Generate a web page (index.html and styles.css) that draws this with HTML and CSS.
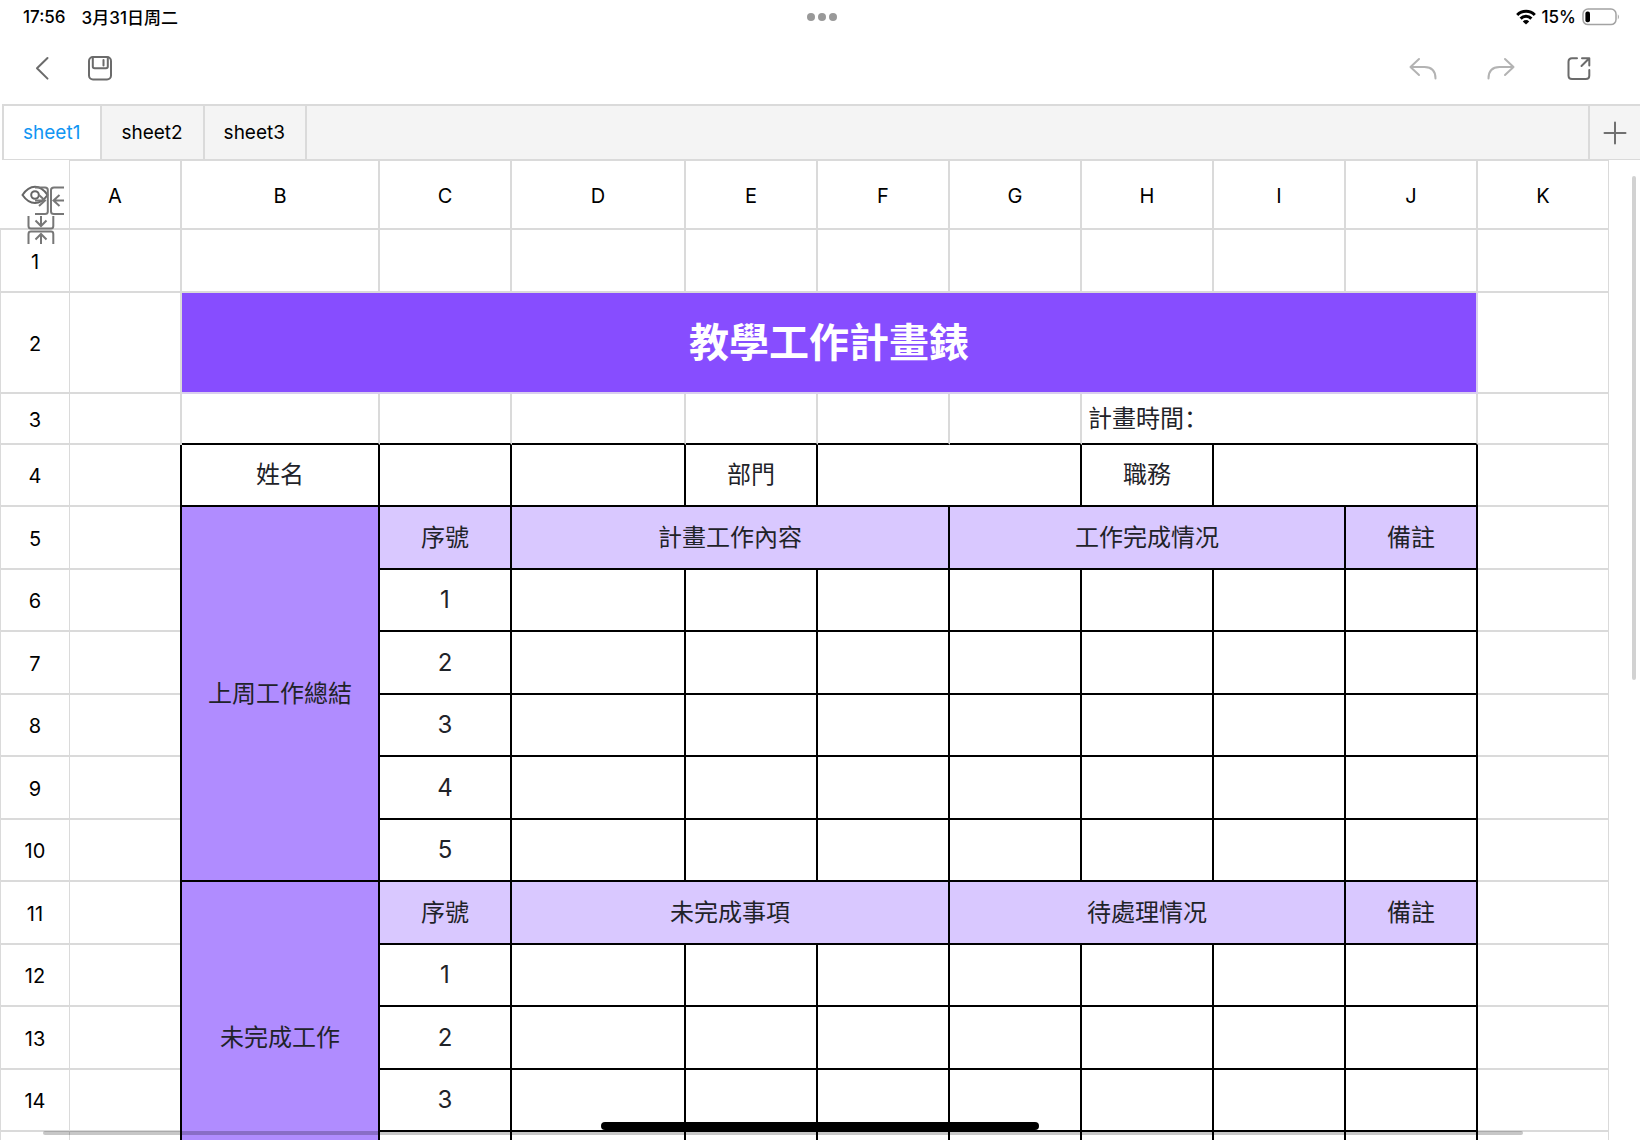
FILE: index.html
```html
<!DOCTYPE html>
<html lang="zh-CN">
<head>
    <meta charset="UTF-8">
    <meta name="viewport" content="width=device-width, initial-scale=1.0">
    <title>教學工作計畫錶</title>
    <link rel="stylesheet" href="styles.css">
</head>
<body>
    <div class="statusbar">
      <div class="status-left">
        <span>17:56</span>
        <span>3月31日周二</span>
      </div>
      <div class="dots"><i></i><i></i><i></i></div>
      <div class="status-right">
        <svg width="20" height="16" viewBox="0 0 20 16" fill="none" stroke="#000" stroke-width="3">
          <path d="M1.2 6 a12.4 12.4 0 0 1 17.6 0"/>
          <path d="M4.6 9.6 a7.6 7.6 0 0 1 10.8 0"/>
          <path d="M10 15.6 L6.8 12.4 a4.6 4.6 0 0 1 6.4 0 Z" fill="#000" stroke="none"/>
        </svg>
        <span>15%</span>
        <svg class="battery" width="38" height="18" viewBox="0 0 38 18">
          <rect x="1" y="1" width="33" height="15.6" rx="5" fill="none" stroke="#a3a3a3" stroke-width="1.5"/>
          <rect x="3.4" y="3.4" width="4.6" height="10.8" rx="2" fill="#000"/>
          <path d="M35.8 6.2 q2.2 2.6 0 5.2 z" fill="#a3a3a3"/>
        </svg>
      </div>
    </div>

    <div class="toolbar">
      <button class="tool" aria-label="Back">
        <svg width="28" height="28" viewBox="0 0 28 28"><path d="M19.5 4 L9 14.3 L19.5 24.6"/></svg>
      </button>
      <button class="tool" aria-label="Save">
        <svg width="28" height="28" viewBox="0 0 28 28"><rect x="3" y="3" width="22" height="22.5" rx="4"/><path d="M6.8 3.5 V12.5 Q6.8 14.3 8.6 14.3 H20 Q21.8 14.3 21.8 12.5 V3.5 M17.5 6 V11.5"/></svg>
      </button>
      <span class="spacer"></span>
      <button class="tool wide dim" aria-label="Undo">
        <svg width="28" height="28" viewBox="0 0 28 28"><path d="M10 5 L1.5 13 L10 21 M1.5 13 H15.5 Q26.5 13 26.5 24.5"/></svg>
      </button>
      <button class="tool wide dim" aria-label="Redo">
        <svg width="28" height="28" viewBox="0 0 28 28"><path d="M18 5 L26.5 13 L18 21 M26.5 13 H12.5 Q1.5 13 1.5 24.5"/></svg>
      </button>
      <button class="tool wide" aria-label="Share">
        <svg width="28" height="28" viewBox="0 0 28 28"><path d="M12 4.2 H7 Q3.5 4.2 3.5 7.7 V21.5 Q3.5 25 7 25 H20.8 Q24.3 25 24.3 21.5 V16 M17 4.2 H24.3 V11.5 M24.3 4.2 L16.5 12"/></svg>
      </button>
    </div>

    <div class="tabs">
      <button class="tab active">sheet1</button>
      <button class="tab">sheet2</button>
      <button class="tab">sheet3</button>
      <span class="spacer"></span>
      <button class="add" aria-label="Add sheet">
        <svg width="24" height="24" viewBox="0 0 24 24"><path d="M12 1.5 V22.5 M1.5 12 H22.5"/></svg>
      </button>
    </div>

    <div class="sheet">
      <table>
        <colgroup>
          <col class="c-num"><col class="c-a"><col class="c-b"><col class="c-s"><col class="c-d">
          <col class="c-s"><col class="c-s"><col class="c-s"><col class="c-s"><col class="c-s"><col class="c-s">
          <col class="c-k">
        </colgroup>
        <thead>
          <tr>
            <th class="corner"></th><th class="first">A</th><th>B</th><th>C</th><th>D</th><th>E</th><th>F</th><th>G</th><th>H</th><th>I</th><th>J</th><th>K</th>
          </tr>
        </thead>
        <tbody>
          <tr><th>1</th><td></td><td></td><td></td><td></td><td></td><td></td><td></td><td></td><td></td><td></td><td></td></tr>
          <tr class="row-title"><th>2</th><td></td><td class="title" colspan="9">教學工作計畫錶</td><td></td></tr>
          <tr class="row-date"><th>3</th><td></td><td></td><td></td><td></td><td></td><td></td><td></td><td class="left" colspan="3">計畫時間：</td><td></td></tr>
          <tr class="box"><th>4</th><td></td><td class="edge">姓名</td><td></td><td></td><td>部門</td><td colspan="2"></td><td>職務</td><td colspan="2"></td><td></td></tr>
          <tr class="box"><th>5</th><td></td><td class="group edge" rowspan="6">上周工作總結</td><td class="head">序號</td><td class="head" colspan="3">計畫工作內容</td><td class="head" colspan="3">工作完成情况</td><td class="head">備註</td><td></td></tr>
          <tr class="box"><th>6</th><td></td><td>1</td><td></td><td></td><td></td><td></td><td></td><td></td><td></td><td></td></tr>
          <tr class="box"><th>7</th><td></td><td>2</td><td></td><td></td><td></td><td></td><td></td><td></td><td></td><td></td></tr>
          <tr class="box"><th>8</th><td></td><td>3</td><td></td><td></td><td></td><td></td><td></td><td></td><td></td><td></td></tr>
          <tr class="box"><th>9</th><td></td><td>4</td><td></td><td></td><td></td><td></td><td></td><td></td><td></td><td></td></tr>
          <tr class="box"><th>10</th><td></td><td>5</td><td></td><td></td><td></td><td></td><td></td><td></td><td></td><td></td></tr>
          <tr class="box"><th>11</th><td></td><td class="group edge" rowspan="5">未完成工作</td><td class="head">序號</td><td class="head" colspan="3">未完成事項</td><td class="head" colspan="3">待處理情况</td><td class="head">備註</td><td></td></tr>
          <tr class="box"><th>12</th><td></td><td>1</td><td></td><td></td><td></td><td></td><td></td><td></td><td></td><td></td></tr>
          <tr class="box"><th>13</th><td></td><td>2</td><td></td><td></td><td></td><td></td><td></td><td></td><td></td><td></td></tr>
          <tr class="box"><th>14</th><td></td><td>3</td><td></td><td></td><td></td><td></td><td></td><td></td><td></td><td></td></tr>
          <tr class="box"><th></th><td></td><td></td><td></td><td></td><td></td><td></td><td></td><td></td><td></td><td></td></tr>
        </tbody>
      </table>

      <button class="mini eye" aria-label="Show or hide">
        <svg width="28" height="20" viewBox="0 0 28 20"><path d="M1.5 10 Q7 1.8 14 1.8 T26.5 10 Q21 18 14 18 T1.5 10 Z"/><circle cx="14" cy="10" r="3.8"/></svg>
      </button>
      <button class="mini fold-cols" aria-label="Fold columns">
        <svg width="30" height="30" viewBox="0 0 30 30"><path d="M1 1.5 H11 Q13.8 1.5 13.8 4 V25.5 Q13.8 28 11 28 H1 M30 1.5 H20 Q17 1.5 17 4 V25.5 Q17 28 20 28 H30"/><path d="M1 14.5 H11 M5 9 L11 14.5 L5 20 M30 14.5 H19.5 M25.5 9 L19.5 14.5 L25.5 20"/></svg>
      </button>
      <button class="mini fold-rows" aria-label="Fold rows">
        <svg width="28" height="30" viewBox="0 0 28 30"><path d="M1.5 1 V11 Q1.5 13.6 4 13.6 H24 Q26.3 13.6 26.3 11 V1 M1.5 29 V19 Q1.5 16.6 4 16.6 H24 Q26.3 16.6 26.3 19 V29"/><path d="M14 1 V11 M8.5 5.5 L14 11 L19.5 5.5 M14 29 V19 M8.5 24.5 L14 19 L19.5 24.5"/></svg>
      </button>

      <div class="scroll-y"></div>
      <div class="scroll-x"></div>
      <div class="home"></div>
    </div>
</body>
</html>
```
FILE: styles.css
```css
* {
  box-sizing: border-box;
}

body {
  margin: 0;
  height: 100vh;
  display: flex;
  flex-direction: column;
  overflow: hidden;
  background: #fff;
  color: #000;
  font-family: Inter, "Noto Sans CJK SC", sans-serif;
}

button {
  padding: 0;
  border: 0;
  background: none;
  color: inherit;
  font: inherit;
}

svg {
  display: block;
}

.spacer {
  flex: 1;
}

/* status bar */
.statusbar {
  display: grid;
  grid-template-columns: 1fr auto 1fr;
  align-items: center;
  height: 33px;
  padding: 0 20px 0 23px;
  font-size: 17px;
  font-weight: 500;
}

.status-left,
.status-right {
  display: flex;
  align-items: center;
  gap: 16px;
}

.status-right {
  justify-content: flex-end;
  gap: 6px;
}

.dots {
  display: flex;
  gap: 3px;
}

.dots i {
  width: 8px;
  height: 8px;
  border-radius: 50%;
  background: #999;
}

/* toolbar */
.toolbar {
  display: flex;
  align-items: center;
  gap: 30px;
  height: 71px;
  padding: 0 47px 2px 28px;
}

.tool svg {
  fill: none;
  stroke: #6b6b6b;
  stroke-width: 2;
  stroke-linecap: round;
  stroke-linejoin: round;
}

.tool.wide + .wide {
  margin-left: 20px;
}

.tool.dim svg {
  stroke: #b3b3b3;
}

/* sheet tabs */
.tabs {
  display: flex;
  height: 56px;
  margin-left: 2px;
  border: solid #dadada;
  border-width: 2px 0 1px 2px;
  background: #f4f4f4;
}

.tab {
  padding: 0 20px 0 19px;
  border-right: 2px solid #dadada;
  font-size: 19px;
}

.tab.active {
  background: #fff;
  color: #1296f3;
}

.add {
  width: 52px;
  padding-left: 13px;
  border-left: 2px solid #dadada;
}

.add svg {
  fill: none;
  stroke: #707070;
  stroke-width: 2;
  stroke-linecap: round;
}

/* grid */
.sheet {
  position: relative;
  flex: 1;
  min-height: 0;
  padding-right: 31px;
  overflow: hidden;
}

table {
  width: 100%;
  table-layout: fixed;
  border-collapse: separate;
  border-spacing: 0;
}

.c-num { width: 70px; }
.c-a { width: 112px; }
.c-b { width: 198px; }
.c-s { width: 132px; }
.c-d { width: 174px; }
.c-k { width: 131px; }

th,
td {
  padding: 0;
  border: solid #dadada;
  border-width: 0 2px 2px 0;
  text-align: center;
  vertical-align: middle;
}

th {
  padding-top: 2px;
  font-size: 20px;
  font-weight: 400;
}

td {
  color: #1f2329;
  font-size: 24px;
  line-height: 32px;
}

thead tr { height: 70px; }
tbody tr { height: 63px; }
tbody tr:nth-child(even) { height: 62px; }
tbody tr.row-title { height: 101px; }
tbody tr.row-date { height: 51px; }

thead th {
  border-top-width: 1px;
}

thead .corner {
  border-top-width: 0;
  border-right-width: 1px;
}

thead .first {
  padding-right: 20px;
}

tbody th {
  border-left-width: 1px;
  border-right-width: 1px;
}

th:last-child,
td:last-child {
  border-right-width: 1px;
}

.title {
  border-color: #d9cfee;
  background: #874dff;
  color: #fff;
  font-size: 40px;
  font-weight: 700;
  line-height: 48px;
}

.left {
  padding-left: 6px;
  text-align: left;
}

/* black frame of the plan */
.row-date td:not(:nth-child(2)):not(:last-child) {
  border-bottom-color: #000;
}

.box td {
  border-color: #000;
}

.box td:nth-child(2) {
  border-bottom-color: #dadada;
}

.box td:last-child {
  border-color: #dadada;
}

.edge {
  position: relative;
  box-shadow: -2px 0 #000;
}

.group {
  background: #b08cff;
}

.head {
  background: #d9c8ff;
}

/* handles over the corner */
.mini {
  position: absolute;
}

.mini svg {
  fill: none;
  stroke: #777;
  stroke-width: 2;
}

.eye {
  left: 21px;
  top: 25px;
}

.eye svg {
  stroke: #666;
}

.fold-cols {
  left: 34px;
  top: 26px;
}

.fold-rows {
  left: 27px;
  top: 55px;
}

.scroll-y {
  position: absolute;
  top: 16px;
  right: 4px;
  width: 4px;
  height: 54%;
  max-height: 504px;
  border-radius: 2px;
  background: #d2d2d2;
}

.scroll-x {
  position: absolute;
  left: 43px;
  right: 117px;
  bottom: 5px;
  height: 4px;
  border-radius: 2px;
  background: rgba(0, 0, 0, 0.22);
}

.home {
  position: absolute;
  left: 50%;
  bottom: 10px;
  width: 438px;
  height: 8px;
  margin-left: -219px;
  border-radius: 4px;
  background: #000;
}
```
